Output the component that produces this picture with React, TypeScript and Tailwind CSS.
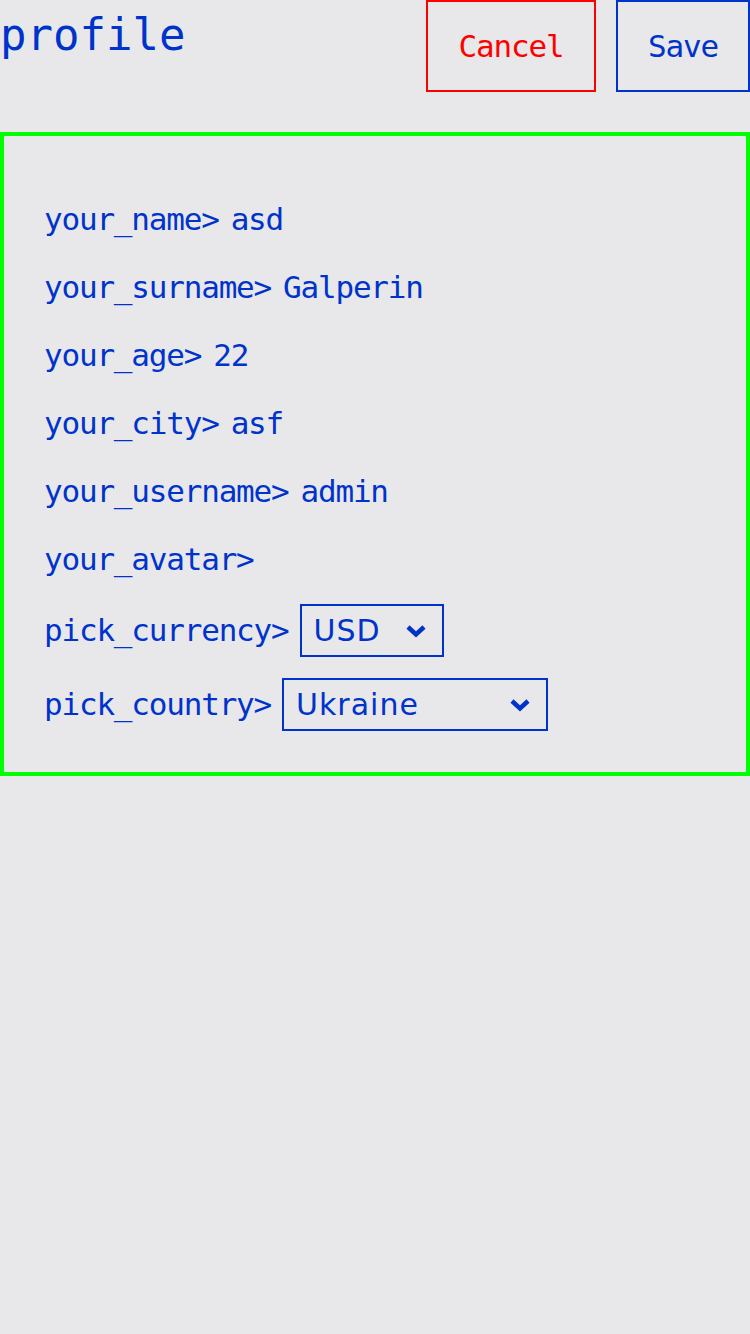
import React from "react";

const BLUE = "#0033cc";

type Field = { label: string; value: string };

const FIELDS: Field[] = [
  { label: "your_name>", value: "asd" },
  { label: "your_surname>", value: "Galperin" },
  { label: "your_age>", value: "22" },
  { label: "your_city>", value: "asf" },
  { label: "your_username>", value: "admin" },
  { label: "your_avatar>", value: "" },
];

function Chevron() {
  return (
    <svg width="22" height="14" viewBox="0 0 22 14" className="shrink-0 ml-auto">
      <polyline
        points="3,3 11,10.5 19,3"
        fill="none"
        stroke={BLUE}
        strokeWidth="4.5"
        strokeLinejoin="miter"
      />
    </svg>
  );
}

function FakeSelect({ value, width }: { value: string; width: string }) {
  return (
    <div
      className={`ml-[11px] flex items-center h-[53px] ${width} border-2 border-[#0033cc] pl-[12px] pr-[15px]`}
    >
      <span className="font-['DejaVu_Sans',sans-serif] text-[30px] tracking-[1px] leading-none">
        {value}
      </span>
      <Chevron />
    </div>
  );
}

export default function App() {
  return (
    <div className="min-h-screen w-[750px] bg-[#e8e8ea] text-[#0033cc] font-['DejaVu_Sans_Mono',monospace]">
      {/* шапка */}
      <div className="flex items-start justify-between h-[92px]">
        <h1 className="pt-[9px] text-[44px] leading-[51px]">profile</h1>
        <div className="flex gap-[20px]">
          <button className="w-[170px] h-[92px] border-2 border-[#ff0000] text-[#ff0000] text-[31px] tracking-[-1.2px] flex items-center justify-center">
            Cancel
          </button>
          <button className="w-[134px] h-[92px] border-2 border-[#0033cc] text-[31px] tracking-[-1.2px] flex items-center justify-center">
            Save
          </button>
        </div>
      </div>

      {/* форма */}
      <div className="mt-[40px] border-4 border-[#00ff00] pl-[40px] pt-[49px] pb-[41px] text-[31px] tracking-[-1.2px]">
        {FIELDS.map((f) => (
          <div key={f.label} className="h-[68px] flex items-center">
            <span>{f.label}</span>
            {f.value && <span className="ml-[12px]">{f.value}</span>}
          </div>
        ))}

        <div className="mt-[11px] flex flex-col gap-[21px]">
          <div className="flex items-baseline">
            <span>pick_currency&gt;</span>
            <FakeSelect value="USD" width="w-[144px]" />
          </div>
          <div className="flex items-baseline">
            <span>pick_country&gt;</span>
            <FakeSelect value="Ukraine" width="w-[266px]" />
          </div>
        </div>
      </div>
    </div>
  );
}
